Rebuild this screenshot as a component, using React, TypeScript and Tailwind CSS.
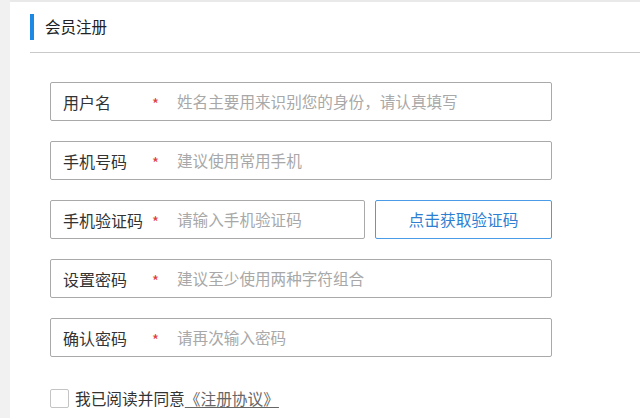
import React from "react";

const font = { fontFamily: '"Noto Sans CJK SC", "Noto Sans", sans-serif' };

function Row({ label, placeholder, w }: { label: string; placeholder: string; w: string }) {
  return (
    <div className={`flex items-center h-[39px] ${w} border border-[#a9a9a9] rounded-[2px] pl-[12px] bg-white`}>
      <span className="w-[89px] text-[16px] text-[#333] leading-none whitespace-nowrap">{label}</span>
      <span className="w-[25px] text-[15px] text-[#e03a3a] leading-none translate-y-[2px]">*</span>
      <span className="text-[15.6px] text-[#a8a8a8] leading-none whitespace-nowrap">{placeholder}</span>
    </div>
  );
}

export default function App() {
  return (
    <div className="flex w-[640px] h-[418px] bg-white overflow-hidden" style={font}>
      <div className="w-[10px] h-full bg-[#f1f1f1]" />
      <div className="flex-1 flex flex-col border-t-2 border-[#e9e9e9]">
        <div className="pl-[20px]">
          <div className="flex items-center h-[51px] border-b border-[#c9c9c9]">
            <div className="w-[4px] h-[26px] bg-[#1e88e5]" />
            <span className="ml-[11px] text-[15.5px] text-[#222]">会员注册</span>
          </div>
        </div>
        <div className="pl-[40px] pt-[29px] flex flex-col gap-[20px]">
          <Row label="用户名" placeholder="姓名主要用来识别您的身份，请认真填写" w="w-[502px]" />
          <Row label="手机号码" placeholder="建议使用常用手机" w="w-[502px]" />
          <div className="flex gap-[10px]">
            <Row label="手机验证码" placeholder="请输入手机验证码" w="w-[315px]" />
            <div className="w-[177px] h-[39px] border border-[#4b9be6] rounded-[2px] flex items-center justify-center text-[15.7px] text-[#2e7fd2]">
              点击获取验证码
            </div>
          </div>
          <Row label="设置密码" placeholder="建议至少使用两种字符组合" w="w-[502px]" />
          <Row label="确认密码" placeholder="请再次输入密码" w="w-[502px]" />
        </div>
        <div className="pl-[40px] mt-[30px] flex items-center">
          <div className="w-[19px] h-[19px] border border-[#c4c4c4] rounded-[2px] bg-white" />
          <span className="ml-[6px] text-[15.7px] text-[#333]">我已阅读并同意</span>
          <span className="text-[15.7px] text-[#666] underline underline-offset-2">《注册协议》</span>
        </div>
      </div>
    </div>
  );
}
